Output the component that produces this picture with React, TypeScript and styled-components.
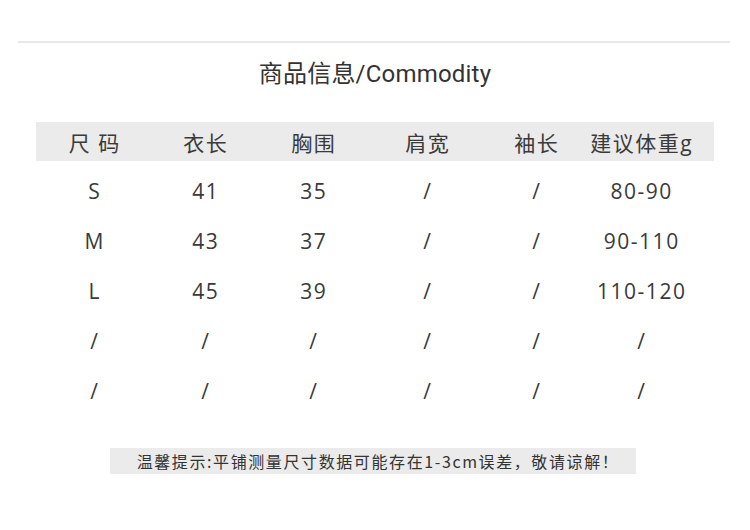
import React from "react";
import styled, { createGlobalStyle } from "styled-components";

const GlobalStyle = createGlobalStyle`
  html, body {
    margin: 0;
    padding: 0;
    background: #ffffff;
  }
`;

const Page = styled.div`
  width: 750px;
  height: 530px;
  background: #ffffff;
  color: #333333;
  font-family: "Open Sans", "Noto Sans CJK SC", sans-serif;
  overflow: hidden;
  display: flex;
  flex-direction: column;
`;

const Divider = styled.div`
  margin: 41px 20px 0 18px;
  height: 2px;
  background: #e8e8e8;
`;

const Title = styled.h1`
  margin: 16px 0 0;
  height: 30px;
  line-height: 30px;
  text-align: center;
  font-family: Roboto, "Noto Sans CJK SC", sans-serif;
  font-weight: 400;
  font-size: 24px;
  letter-spacing: 0.2px;
  color: #333333;
`;

const Table = styled.div`
  margin: 33px 36px 0 36px;
  display: flex;
  flex-direction: column;
`;

const Row = styled.div<{ $head?: boolean }>`
  display: grid;
  grid-template-columns: 116px 106px 110px 118px 100px 110px 1fr;
  align-items: center;
  height: ${(p) => (p.$head ? "39px" : "50px")};
  background: ${(p) => (p.$head ? "#ebebeb" : "transparent")};
  font-size: 21px;
  letter-spacing: 1.5px;
  color: #3a3a3a;

  &:nth-child(2) {
    margin-top: 5px;
  }
`;

const Cell = styled.div`
  text-align: center;
  white-space: nowrap;
  padding-left: 1.5px;
`;

const Note = styled.div`
  margin: 32px 0 0 110px;
  box-sizing: border-box;
  padding-left: 10px;
  width: 526px;
  height: 26px;
  line-height: 26px;
  background: #ebebeb;
  text-align: center;
  font-family: "Noto Sans CJK SC", sans-serif;
  font-size: 16px;
  color: #333333;
  letter-spacing: 1.6px;
  white-space: nowrap;
`;

const header = ["尺 码", "衣长", "胸围", "肩宽", "袖长", "建议体重g"];
const rows = [
  ["S", "41", "35", "/", "/", "80-90"],
  ["M", "43", "37", "/", "/", "90-110"],
  ["L", "45", "39", "/", "/", "110-120"],
  ["/", "/", "/", "/", "/", "/"],
  ["/", "/", "/", "/", "/", "/"],
];

export default function App() {
  return (
    <Page>
      <GlobalStyle />
      <Divider />
      <Title>商品信息/Commodity</Title>
      <Table>
        <Row $head>
          {header.map((h) => (
            <Cell key={h}>{h}</Cell>
          ))}
        </Row>
        {rows.map((r, i) => (
          <Row key={i}>
            {r.map((c, j) => (
              <Cell key={j}>{c}</Cell>
            ))}
          </Row>
        ))}
      </Table>
      <Note>温馨提示:平铺测量尺寸数据可能存在1-3cm误差，敬请谅解！</Note>
    </Page>
  );
}
